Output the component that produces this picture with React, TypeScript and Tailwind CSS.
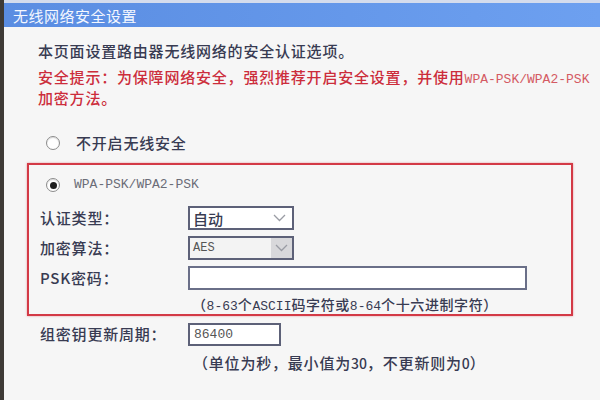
import React from "react";

const cjk = { fontFamily: '"Noto Sans CJK SC", "Noto Sans", sans-serif' };
const mono = { fontFamily: '"Liberation Mono", "DejaVu Sans Mono", monospace' };

function Chevron() {
  return (
    <svg width="13" height="8" viewBox="0 0 13 8">
      <polyline points="1,1 6.5,6.5 12,1" fill="none" stroke="#9a9ca4" strokeWidth="1.3" />
    </svg>
  );
}

function Radio({ checked }: { checked?: boolean }) {
  return (
    <div className="w-[14px] h-[14px] rounded-full border border-[#8c8c8c] bg-white flex items-center justify-center shadow-[inset_0_1px_1px_rgba(0,0,0,0.15)]">
      {checked && <div className="w-[7px] h-[7px] rounded-full bg-[#1e1e1e]" />}
    </div>
  );
}

export default function App() {
  return (
    <div className="w-[600px] h-[400px] flex overflow-hidden bg-[#f6f6f6] text-[#383b52] font-medium" style={cjk}>
      <div className="w-[4px] shrink-0 bg-[#3e3a36]" />
      <div className="flex-1 flex flex-col min-w-0">
        <div className="h-[3px] bg-[#d4dced]" />
        <div className="h-[24px] shrink-0 flex items-center pl-[9px] bg-gradient-to-r from-[#5a8de2] to-[#6da0f0] text-[15px] font-normal tracking-[0.5px] text-[#f4f7ff] leading-none">
          无线网络安全设置
        </div>

        <div className="pl-[23px] flex flex-col">
          <div className="mt-[13px] pl-[11px] h-[22px] leading-[22px] text-[15px] tracking-[0.8px] whitespace-nowrap">
            本页面设置路由器无线网络的安全认证选项。
          </div>
          <div className="mt-[4px] pl-[11px] text-[15px] tracking-[0.8px] leading-[21px] text-[#cc2d3b] whitespace-nowrap">
            <div className="h-[21px]">
              安全提示：为保障网络安全，强烈推荐开启安全设置，并使用
              <span className="text-[13px] tracking-[0px] font-normal text-[#d45a63]" style={mono}>WPA-PSK/WPA2-PSK</span>
            </div>
            <div className="h-[21px]">加密方法。</div>
          </div>

          <div className="mt-[25px] h-[20px] flex items-center ml-[19px] gap-[16px]">
            <Radio />
            <span className="text-[15px] tracking-[0.8px]">不开启无线安全</span>
          </div>

          <div className="mt-[10px] w-[546px] h-[153px] border-2 border-[#d33a46] shadow-[0_0_2px_rgba(210,60,70,0.5)] flex flex-col">
            <div className="mt-[10px] h-[20px] flex items-center ml-[17px] gap-[14px]">
              <Radio checked />
              <span className="text-[13px] font-normal text-[#6b6d78]" style={mono}>WPA-PSK/WPA2-PSK</span>
            </div>

            <div className="mt-[11px] flex flex-col gap-[6px]">
              <div className="h-[24px] flex items-center">
                <span className="w-[159px] pl-[11px] text-[15px] tracking-[0.8px]">认证类型：</span>
                <div className="w-[106px] h-[24px] border-2 border-[#5d6178] bg-white flex items-center justify-between pl-[3px] pr-[6px]">
                  <span className="text-[15px] leading-none">自动</span>
                  <Chevron />
                </div>
              </div>
              <div className="h-[24px] flex items-center">
                <span className="w-[159px] pl-[11px] text-[15px] tracking-[0.8px]">加密算法：</span>
                <div className="w-[106px] h-[24px] border-2 border-[#5d6178] bg-[#f3f3f3] flex items-center justify-between pl-[3px]">
                  <span className="text-[12px] leading-none font-normal text-[#555]" style={mono}>AES</span>
                  <div className="w-[21px] h-full bg-[#d8d8db] flex items-center justify-center">
                    <Chevron />
                  </div>
                </div>
              </div>
              <div className="h-[24px] flex items-center">
                <span className="w-[159px] pl-[11px] text-[15px] tracking-[0.8px]">PSK密码：</span>
                <div className="w-[339px] h-[24px] border-2 border-[#6a6f88] bg-white" />
              </div>
            </div>

            <div className="mt-[4px] h-[20px] leading-[20px] pl-[163px] text-[14px] tracking-[0.6px] whitespace-nowrap">
              （<span className="text-[13px] tracking-[0px] font-normal" style={mono}>8-63</span>个<span className="text-[13px] tracking-[0px] font-normal" style={mono}>ASCII</span>码字符或<span className="text-[13px] tracking-[0px] font-normal" style={mono}>8-64</span>个十六进制字符）
            </div>
          </div>

          <div className="mt-[7px] h-[23px] flex items-center">
            <span className="w-[161px] pl-[13px] text-[15px] tracking-[0.8px]">组密钥更新周期：</span>
            <div className="w-[93px] h-[23px] border-2 border-[#5d6178] bg-white flex items-center pl-[4px]">
              <span className="text-[13px] font-normal text-[#555]" style={mono}>86400</span>
            </div>
          </div>
          <div className="mt-[7px] h-[20px] leading-[20px] pl-[166px] text-[15px] tracking-[0.8px] whitespace-nowrap">
            （单位为秒，最小值为<span className="text-[14px] tracking-[0px]">30</span>，不更新则为<span className="text-[14px] tracking-[0px]">0</span>）
          </div>
        </div>
      </div>
    </div>
  );
}
